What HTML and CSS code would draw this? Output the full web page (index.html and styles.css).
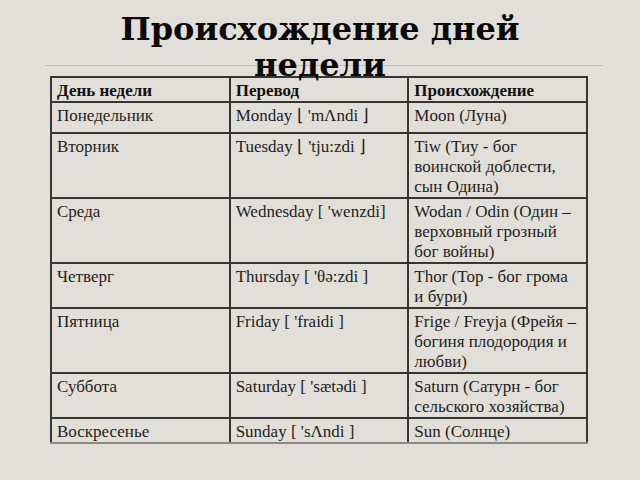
FILE: index.html
```html
<!DOCTYPE html>
<html lang="ru">
<head>
<meta charset="utf-8">
<title>Происхождение дней недели</title>
<link rel="stylesheet" href="styles.css">
</head>
<body>
<div class="slide">
  <h1 class="title">Происхождение дней недели</h1>
  <div class="rule"></div>
  <table class="days">
    <tr class="row-head">
      <th>День недели</th>
      <th>Перевод</th>
      <th>Происхождение</th>
    </tr>
    <tr class="row-mon">
      <td>Понедельник</td>
      <td>Monday ⌊ 'mΛndi ⌋</td>
      <td>Moon (Луна)</td>
    </tr>
    <tr>
      <td>Вторник</td>
      <td>Tuesday ⌊ 'tju:zdi ⌋</td>
      <td>Tiw (Тиу - бог<br>воинской доблести,<br>сын Одина)</td>
    </tr>
    <tr>
      <td>Среда</td>
      <td>Wednesday [ 'wenzdi]</td>
      <td>Wodan / Odin (Один –<br>верховный грозный<br>бог войны)</td>
    </tr>
    <tr>
      <td>Четверг</td>
      <td>Thursday [ 'θə:zdi ]</td>
      <td>Thor (Тор - бог грома<br>и бури)</td>
    </tr>
    <tr>
      <td>Пятница</td>
      <td>Friday [ 'fraidi ]</td>
      <td>Frige / Freyja (Фрейя –<br>богиня плодородия и<br>любви)</td>
    </tr>
    <tr>
      <td>Суббота</td>
      <td>Saturday [ 'sætədi ]</td>
      <td>Saturn (Сатурн - бог<br>сельского хозяйства)</td>
    </tr>
    <tr class="row-last">
      <td>Воскресенье</td>
      <td>Sunday [ 'sΛndi ]</td>
      <td>Sun (Солнце)</td>
    </tr>
  </table>
</div>
</body>
</html>
```
FILE: styles.css
```css
html, body {
  margin: 0;
  padding: 0;
  background: #e2dfd8;
}

.slide {
  width: 640px;
  height: 480px;
  overflow: hidden;
}

.title {
  position: relative;
  z-index: 2;
  margin: 0 auto;
  width: 500px;
  height: 65px;
  padding-top: 11px;
  box-sizing: border-box;
  text-align: center;
  font-family: "DejaVu Serif", serif;
  font-weight: bold;
  font-size: 32px;
  line-height: 36px;
  color: #0a0a0a;
}

.rule {
  margin-left: 45px;
  width: 558px;
  height: 1px;
  background: #c3bfb8;
}

.days {
  position: relative;
  z-index: 1;
  margin: 10px 0 0 50px;
  width: 538px;
  border-collapse: collapse;
  table-layout: fixed;
  font-family: "Liberation Serif", "Times New Roman", serif;
  font-size: 17px;
  line-height: 20px;
  color: #1e1e1e;
}

.days th,
.days td {
  border: 2px solid #363636;
  padding: 3px 4px 0 5px;
  text-align: left;
  vertical-align: top;
  width: 33.33%;
}

.days th {
  font-weight: bold;
  color: #111;
}

.row-head th {
  height: 20px;
}

.row-mon td {
  height: 26px;
}

.row-last td {
  height: 19px;
  border-bottom-color: #8c8a86;
}
```
